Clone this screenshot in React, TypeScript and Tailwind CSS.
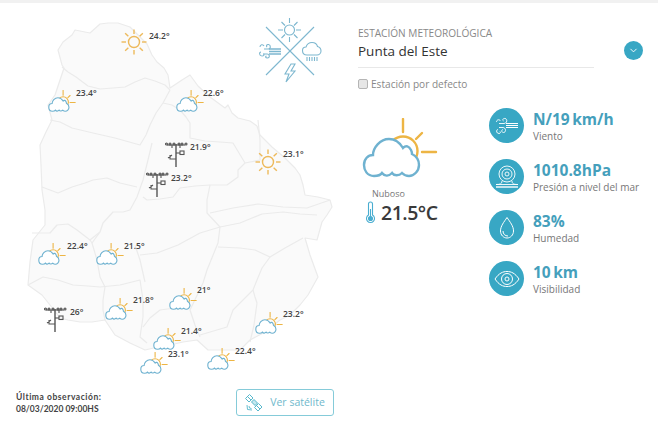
import { ChevronDown } from "lucide-react";

const borders = [
  "62,67 68,72 76,77 88,86 100,89 113,88 125,87 135,82 145,78 155,81 165,85 170,90",
  "50,120 60,122 72,128 93,133 115,138 140,145 146,135 150,125 156,113 163,103 170,90",
  "163,103 172,105 180,110 186,117 190,123 190,138 205,141 220,142 233,143 239,153 245,163 260,160 260,140 258,120",
  "152,143 148,160 143,180 137,197 130,210 123,212 113,212 103,223 100,232 92,243 90,240",
  "245,163 238,170 238,177 227,185 210,185 195,186 180,188 173,197 160,199 147,200 143,197",
  "42,187 50,190 58,193 72,187 85,183 93,180 107,178 120,183 137,187",
  "32,233 50,233 57,225 68,224 77,230 90,240 100,232",
  "210,185 207,200 207,213 220,227",
  "28,285 43,277 58,280 73,285 88,286 100,287 120,285 140,280 143,300 143,317 140,337 147,343",
  "105,287 103,300 103,310 105,320",
  "92,243 97,260 100,277 105,287",
  "135,245 140,260 145,282",
  "140,255 157,253 178,245 200,233 220,227 218,243 207,270 203,283 190,310 195,325 200,337",
  "220,227 240,223 262,214 283,212 300,214 317,215",
  "218,247 240,248 255,250 270,257 262,268 257,280 253,290 233,310 227,327 200,335",
  "270,257 285,248 303,238",
  "253,290 255,297 257,303 254,325 250,342",
  "143,327 150,318 160,310 175,308 190,307",
  "210,213 233,208 258,204 283,207 307,208 330,200",
];

const outline =
  "100,24 108,23 118,23 130,27 138,35 147,44 152,55 157,62 164,68 168,75 170,88 182,80 190,75 198,86 210,97 225,108 228,105 232,113 238,118 250,121 257,126 260,135 272,147 285,158 295,168 300,175 303,185 305,195 318,197 330,200 332,207 327,215 322,222 317,240 305,238 310,255 318,277 308,295 300,305 290,315 280,320 265,332 250,340 240,350 225,350 208,350 197,340 183,342 170,345 158,347 145,350 130,343 115,335 105,320 92,322 80,322 68,320 60,318 50,305 42,295 28,285 30,262 33,240 45,225 45,210 42,190 41,165 40,145 46,132 52,120 48,105 55,95 60,80 64,68 62,65 58,50 63,42 72,35 75,30 90,33";

type Marker = { left: number; top: number };

const suns: Marker[] = [
  { left: 121, top: 29 },
  { left: 255, top: 149 },
];

const clouds: Marker[] = [
  { left: 48, top: 90 },
  { left: 176, top: 90 },
  { left: 38, top: 243 },
  { left: 96, top: 243 },
  { left: 105, top: 298 },
  { left: 169, top: 288 },
  { left: 153, top: 328 },
  { left: 140, top: 352 },
  { left: 207, top: 348 },
  { left: 255, top: 312 },
];

const stations: Marker[] = [
  { left: 165, top: 142 },
  { left: 146, top: 172 },
  { left: 44, top: 307 },
];

const temps = [
  { t: "24.2°", left: 149, top: 29 },
  { t: "23.4°", left: 76, top: 86 },
  { t: "22.6°", left: 203, top: 86 },
  { t: "21.9°", left: 190, top: 140 },
  { t: "23.2°", left: 171, top: 171 },
  { t: "23.1°", left: 283, top: 147 },
  { t: "22.4°", left: 67, top: 239 },
  { t: "21.5°", left: 124, top: 239 },
  { t: "21.8°", left: 133, top: 293 },
  { t: "21°", left: 197, top: 283 },
  { t: "26°", left: 70, top: 305 },
  { t: "21.4°", left: 181, top: 324 },
  { t: "23.1°", left: 168, top: 347 },
  { t: "22.4°", left: 235, top: 344 },
  { t: "23.2°", left: 283, top: 307 },
];

function SunIcon() {
  const rays = [0, 45, 90, 135, 180, 225, 270, 315];
  return (
    <svg width="26" height="26" viewBox="0 0 26 26" fill="none" stroke="#edb95a" strokeWidth="1.4">
      <circle cx="13" cy="13" r="5.5" />
      {rays.map((r) => (
        <line key={r} x1="13" y1="0.5" x2="13" y2="5" transform={`rotate(${r} 13 13)`} />
      ))}
    </svg>
  );
}

function CloudSun({ className, sw }: { className: string; sw: number }) {
  return (
    <svg className={className} viewBox="0 0 76 60" fill="none">
      <g stroke="#edb544" strokeWidth={sw} strokeLinecap="round">
        <circle cx="41" cy="33" r="14.5" />
        <line x1="41" y1="1" x2="41" y2="14" />
        <line x1="54" y1="21" x2="60" y2="15" />
        <line x1="60" y1="34" x2="74" y2="34" />
      </g>
      <path
        d="M12 58 C5 58 2 52 2 47 C2 41 6 37 11 37 C11 30 18 21 27 21 C34 21 38 25 41 30 C44 27 47 28 49 32 C50 34 50 35 50 36 C54 38 57 42 57 47 C57 53 52 58 47 58 C44 58 42 57 40 55 C37 58 32 58 30 55 C27 58 23 59 20 55 C18 58 15 58 12 58 Z"
        fill="white"
        stroke="#6fb2d0"
        strokeWidth={sw}
      />
    </svg>
  );
}

function StationIcon() {
  return (
    <svg width="23" height="26" viewBox="0 0 23 26" fill="none" stroke="#555" strokeWidth="1.1">
      <line x1="11" y1="2" x2="11" y2="25" strokeWidth="1.4" />
      <line x1="2" y1="3" x2="20" y2="3" />
      <circle cx="1.5" cy="2" r="1" />
      <circle cx="5" cy="2" r="1" />
      <circle cx="9" cy="2" r="1" />
      <circle cx="14" cy="2" r="1" />
      <circle cx="17" cy="2" r="1" />
      <circle cx="21" cy="2" r="1" />
      <path d="M7 3 V6 M15 3 V6" />
      <line x1="11" y1="11" x2="15" y2="11" />
      <rect x="15" y="9" width="4" height="3.5" />
      <path d="M11 17 H5 V13 M3 16 L7 13" />
    </svg>
  );
}

function LogoIcon() {
  return (
    <svg width="66" height="66" viewBox="0 0 66 66" fill="none" stroke="#7db7cf" strokeWidth="1.1">
      <line x1="8" y1="10" x2="56" y2="58" />
      <line x1="56" y1="10" x2="8" y2="58" />
      <circle cx="31.5" cy="13" r="5" />
      <path d="M31.5 1 V6 M31.5 20 V25 M20 13 H25 M38 13 H43 M23.5 5 L27 8.5 M36 17.5 L39.5 21 M39.5 5 L36 8.5 M27 17.5 L23.5 21" />
      <path d="M6 32 H10 C13 32 13 28 10.5 27.5 C8.5 27.2 8 29 9 30" />
      <path d="M5 37 H9 C12 37 12 41 9.5 41 C7.5 41 7 39.5 8.5 39" />
      <path d="M2 30 C2 27.5 5 27 6 29" />
      <path d="M3 35 C1 35 1 39 4 39 C6 39 6.5 37.5 5.5 37" />
      <path d="M11 32 H23 M11 34.5 H23 M11 37 H23" strokeWidth="1.3" />
      <path d="M49 38 C45 38 44.5 35 44.5 33.5 C44.5 31.5 46 30 48 30 C49 27 51 25.5 54 25.5 C57 25.5 59 27.5 59.5 29.5 C61.5 30 63 31.5 63 34 C63 36.5 61 38 59 38 Z" />
      <path d="M49 40 V44 M51.5 40 V44 M54 40 V44 M56.5 40 V44 M59 40 V44" />
      <path d="M33 47 L27 57 H31 L28 65 L37 54 H33 L37 47 Z" />
    </svg>
  );
}

function SatelliteIcon() {
  return (
    <svg width="18" height="18" viewBox="0 0 18 18" fill="none" stroke="#58b8cc" strokeWidth="1">
      <path d="M4.5 0.5 L8 4 L4 8 L0.5 4.5 Z M2.5 2.5 L6 6" />
      <path d="M13.5 9.5 L17 13 L13 17 L9.5 13.5 Z M11.5 11.5 L15 15" />
      <path d="M6.5 8 L9 5.5 L12.5 9 L10 11.5 Z" fill="#c4e8ef" />
      <path d="M2 11 L2.5 15.5 L7 16 M4 12 L4.5 14 L6.5 14.5" strokeWidth="0.9" />
    </svg>
  );
}

function WindIcon() {
  return (
    <svg width="24" height="24" viewBox="0 0 24 24" fill="none" stroke="white" strokeWidth="0.9">
      <path d="M4 9.5 H9 C12 9.5 13 5 10 4.5 C8 4.2 7 6 8.5 7" />
      <path d="M4 13.5 H8 C11 13.5 11.5 18.5 8.5 18.5 C6.5 18.5 6 16 8 15.5" />
      <path d="M1.5 8 C1.5 5.5 4.5 5 5.5 7" />
      <path d="M3 15.5 C1 15.5 1 19.5 4 19.5 C5.5 19.5 6 18 5 17.5" />
      <path d="M11 9.5 H23 M11 11.5 H23 M11 13.5 H23" strokeWidth="1.2" />
    </svg>
  );
}

function GaugeIcon() {
  return (
    <svg width="26" height="26" viewBox="0 0 26 26" fill="none" stroke="white" strokeWidth="0.9">
      <circle cx="13" cy="10" r="8" />
      <circle cx="13" cy="10" r="5" />
      <circle cx="13" cy="10" r="2" />
      <path d="M8 17 C8 20 6 20.5 2 20.5 H24 C20 20.5 18 20 18 17" />
      <path d="M2 23 H24" strokeWidth="1.4" />
    </svg>
  );
}

function DropIcon() {
  return (
    <svg width="22" height="24" viewBox="0 0 22 24" fill="none" stroke="white" strokeWidth="1">
      <path d="M11 1.5 C8 6 4.5 10 4.5 15 C4.5 19 7.5 22 11 22 C14.5 22 17.5 19 17.5 15 C17.5 10 14 6 11 1.5 Z" />
      <path d="M7 15 C7 18 9 20 12 20" />
    </svg>
  );
}

function EyeIcon() {
  return (
    <svg width="26" height="18" viewBox="0 0 26 18" fill="none" stroke="white" strokeWidth="1">
      <path d="M1 9 C5 3 9 1.5 13 1.5 C17 1.5 21 3 25 9 C21 15 17 16.5 13 16.5 C9 16.5 5 15 1 9 Z" />
      <circle cx="13" cy="9" r="5.5" />
      <circle cx="13" cy="9" r="2" />
    </svg>
  );
}

const metrics = [
  { value: "N/19 km/h", label: "Viento", icon: <WindIcon /> },
  { value: "1010.8hPa", label: "Presión a nivel del mar", icon: <GaugeIcon /> },
  { value: "83%", label: "Humedad", icon: <DropIcon /> },
  { value: "10 km", label: "Visibilidad", icon: <EyeIcon /> },
];

export default function App() {
  return (
    <div className="w-[658px] h-[425px] overflow-hidden bg-white font-['Open_Sans',sans-serif]">
      <div className="h-[3px] bg-[#f1f1f1]" />
      <div className="flex">
        {/* Mapa */}
        <div className="w-[358px] shrink-0">
          <div className="relative h-[382px]">
            <svg
              className="absolute left-0 top-[-3px]"
              width="358"
              height="385"
              viewBox="0 0 358 385"
              fill="none"
              stroke="#ebebeb"
              strokeWidth="1.2"
              strokeLinejoin="round"
            >
              <polygon points={outline} fill="#fafafa" />
              {borders.map((b) => (
                <polyline key={b} points={b} />
              ))}
            </svg>

            {suns.map((m) => (
              <div key={m.left} className="absolute" style={{ left: m.left, top: m.top - 3 }}>
                <SunIcon />
              </div>
            ))}
            {clouds.map((m) => (
              <div key={m.left} className="absolute" style={{ left: m.left, top: m.top - 3 }}>
                <CloudSun className="w-[28px] h-[22px]" sw={3} />
              </div>
            ))}
            {stations.map((m) => (
              <div key={m.left} className="absolute" style={{ left: m.left, top: m.top - 3 }}>
                <StationIcon />
              </div>
            ))}
            {temps.map((x) => (
              <span
                key={x.left + x.t}
                className="absolute text-[8.5px] leading-[13px] font-semibold text-[#444]"
                style={{ left: x.left, top: x.top - 3 }}
              >
                {x.t}
              </span>
            ))}

            <div className="absolute left-[258px] top-[14px]">
              <LogoIcon />
            </div>
          </div>

          <div className="flex items-center justify-between pl-4 pr-6 mt-[4px]">
            <div className="font-['Lato',sans-serif] text-[8.5px] leading-[12px] font-bold text-[#444]">
              <p className="tracking-[0.55px]">Última observación:</p>
              <p>08/03/2020 09:00HS</p>
            </div>
            <button className="flex items-center justify-center gap-[7px] w-[98px] h-[27px] border border-[#85cbd9] rounded-[3px] text-[10.5px] text-[#6fb9cc]">
              <SatelliteIcon />
              Ver satélite
            </button>
          </div>
        </div>

        {/* Estación */}
        <div className="flex-1 pt-[24px]">
          <div className="flex items-start">
            <div className="w-[236px] border-b border-[#e8e8e8] pb-[6px]">
              <p className="text-[10.1px] leading-[13px] text-[#888]">ESTACIÓN METEOROLÓGICA</p>
              <p className="text-[13.5px] leading-[20px] text-[#333] mt-[1px]">Punta del Este</p>
            </div>
            <div className="ml-[30px] mt-[14px] w-[19px] h-[19px] rounded-full bg-[#38a7c4] flex items-center justify-center text-white">
              <ChevronDown size={11} />
            </div>
          </div>

          <label className="flex items-center gap-[3px] mt-[9px] text-[10.1px] leading-[14px] text-[#888]">
            <input
              type="checkbox"
              className="appearance-none w-[10px] h-[10px] m-0 bg-[#e6e6e6] border border-[#b5b5b5] rounded-[2px]"
            />
            <span>Estación por defecto</span>
          </label>

          <div className="flex mt-[17px]">
            <div className="w-[131px] pt-[10px]">
              <CloudSun className="w-[76px] h-[60px] ml-[4px]" sw={2.4} />
              <p className="text-[9px] leading-[12px] text-[#777] ml-[14px] mt-[10px]">Nuboso</p>
              <div className="flex items-center ml-[8px] gap-[6px]">
                <svg width="9" height="24" viewBox="0 0 9 24" fill="none" stroke="#49add0" strokeWidth="1.1">
                  <path d="M2.5 14 V3 A2 2 0 0 1 6.5 3 V14 A4 4 0 1 1 2.5 14 Z" />
                  <circle cx="4.5" cy="17.5" r="2" fill="#49add0" />
                  <line x1="4.5" y1="8" x2="4.5" y2="16" />
                </svg>
                <span className="text-[19.5px] leading-[26px] font-semibold text-[#3a3a3a] tracking-[-0.5px]">
                  21.5°C
                </span>
              </div>
            </div>

            <div className="flex flex-col gap-[16px]">
              {metrics.map((m) => (
                <div key={m.label} className="flex items-center gap-[9px] h-[35px]">
                  <div className="w-[35px] h-[35px] rounded-full bg-[#38a7c4] flex items-center justify-center">
                    {m.icon}
                  </div>
                  <div className="pt-[2px]">
                    <p className="text-[15.5px] leading-[19px] font-bold text-[#459fbc] [word-spacing:-1.5px]">
                      {m.value}
                    </p>
                    <p className="text-[10px] leading-[15px] text-[#777]">{m.label}</p>
                  </div>
                </div>
              ))}
            </div>
          </div>
        </div>
      </div>
    </div>
  );
}
